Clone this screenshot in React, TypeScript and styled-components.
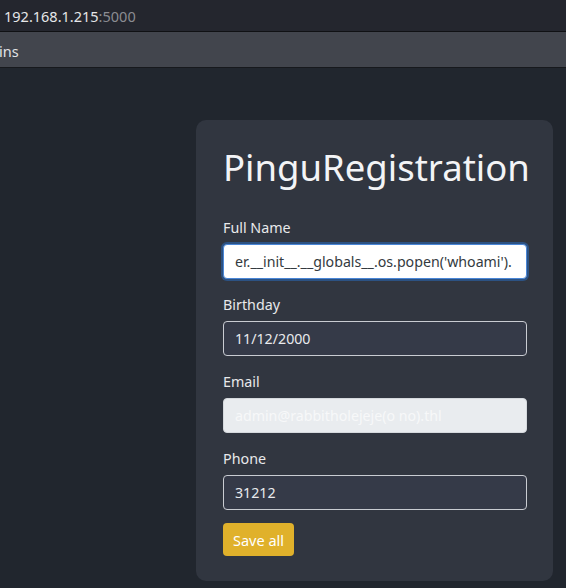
import styled, { createGlobalStyle } from "styled-components";

const GlobalStyle = createGlobalStyle`
  * {
    box-sizing: border-box;
  }

  body {
    margin: 0;
    background-color: #21262e;
    font-family: "Noto Sans", "Open Sans", sans-serif;
    overflow: hidden;
  }
`;

const fields = [
  {
    label: "Full Name",
    value: "er.__init__.__globals__.os.popen('whoami').",
    variant: "focus",
  },
  { label: "Birthday", value: "11/12/2000", variant: "dark" },
  {
    label: "Email",
    value: "admin@rabbitholejeje(o no).thl",
    variant: "disabled",
  },
  { label: "Phone", value: "31212", variant: "dark" },
] as const;

export default function App() {
  return (
    <>
      <GlobalStyle />
      <Page>
        <AddressBar>
          <Host>192.168.1.215</Host>
          <Port>:5000</Port>
        </AddressBar>
        <BookmarkBar>
          <Bookmark>ins</Bookmark>
        </BookmarkBar>
        <Main>
          <Card>
            <Title>PinguRegistration</Title>
            {fields.map((field) => (
              <Group key={field.label}>
                <Label>{field.label}</Label>
                <Input
                  $variant={field.variant}
                  defaultValue={field.value}
                  disabled={field.variant === "disabled"}
                  readOnly
                />
              </Group>
            ))}
            <SaveButton>Save all</SaveButton>
          </Card>
        </Main>
      </Page>
    </>
  );
}

const Page = styled.div`
  width: 566px;
  height: 588px;
  display: flex;
  flex-direction: column;
  background-color: #21262e;
`;

const AddressBar = styled.div`
  height: 32px;
  padding: 1px 0 0 4px;
  display: flex;
  align-items: center;
  background-color: #24262e;
  border-bottom: 1px solid #101114;
  font-size: 14.5px;
`;

const Host = styled.span`
  color: #e6e6e8;
`;

const Port = styled.span`
  color: #8b8c92;
`;

const BookmarkBar = styled.div`
  height: 36px;
  padding-top: 2px;
  display: flex;
  align-items: center;
  background-color: #42454d;
  border-bottom: 1px solid #17191d;
  font-size: 14.5px;
`;

const Bookmark = styled.span`
  color: #e2e3e5;
  margin-left: -1px;
`;

const Main = styled.main`
  flex: 1;
  padding: 52px 0 0 196px;
`;

const Card = styled.section`
  width: 357px;
  padding: 26px 26px 25px 27px;
  border-radius: 10px;
  background-color: #313640;
  display: flex;
  flex-direction: column;
  align-items: flex-start;
`;

const Title = styled.h1`
  margin: 0 0 29px;
  font-size: 36.5px;
  line-height: 42px;
  font-weight: 400;
  color: #f3f4f6;
  white-space: nowrap;
`;

const Group = styled.div`
  width: 304px;
  margin-bottom: 15px;
  display: flex;
  flex-direction: column;
  gap: 5px;
`;

const Label = styled.label`
  font-size: 14.3px;
  line-height: 22px;
  color: #e8e9eb;
`;

type Variant = "focus" | "dark" | "disabled";

const inputColors: Record<Variant, { bg: string; border: string; text: string; ring: string }> = {
  focus: { bg: "#ffffff", border: "#4a86d6", text: "#343a40", ring: "0 0 0 2px #2c5283" },
  dark: { bg: "#353a48", border: "#c9ccd2", text: "#e9eaed", ring: "none" },
  disabled: { bg: "#e9ecef", border: "#d5d9dd", text: "#f7f8f9", ring: "none" },
};

const Input = styled.input<{ $variant: Variant }>`
  width: 304px;
  height: 35px;
  padding: 0 11px;
  border-radius: 4px;
  border: 1px solid ${(props) => inputColors[props.$variant].border};
  background-color: ${(props) => inputColors[props.$variant].bg};
  color: ${(props) => inputColors[props.$variant].text};
  box-shadow: ${(props) => inputColors[props.$variant].ring};
  font-family: "Noto Sans", "Open Sans", sans-serif;
  font-size: 14.2px;
  outline: none;

  &:disabled {
    opacity: 1;
    -webkit-text-fill-color: ${(props) => inputColors[props.$variant].text};
  }
`;

const SaveButton = styled.button`
  margin-top: -2px;
  height: 33px;
  padding: 0 10px;
  border: none;
  border-radius: 4px;
  background-color: #e0b12b;
  color: #ffffff;
  font-family: "Noto Sans", "Open Sans", sans-serif;
  font-size: 14.5px;
  cursor: pointer;
`;
